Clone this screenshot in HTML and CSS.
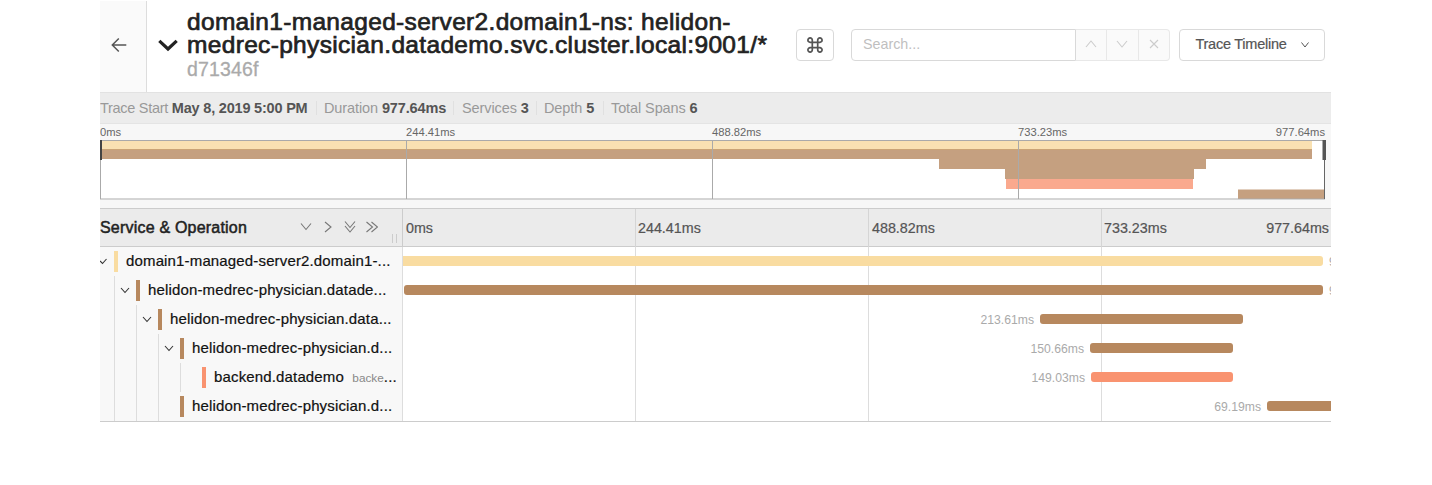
FILE: index.html
```html
<!DOCTYPE html>
<html lang="en">
<head>
<meta charset="utf-8">
<title>Trace Timeline</title>
<link rel="stylesheet" href="styles.css">
</head>
<body>
<main class="trace">
  <header class="top">
    <a class="back"><svg width="16" height="16" viewBox="0 0 16 16"><path d="M15.3 8H1.5M7.8 1.5L1.3 8l6.5 6.5" fill="none" stroke="#555" stroke-width="1.5"/></svg></a>
    <svg class="toggle" width="20" height="13" viewBox="0 0 20 13"><path d="M1.3 1.8L10 10l8.700-8.200" fill="none" stroke="#222" stroke-width="3.200"/></svg>
    <h1 class="title"><span class="t1">domain1-managed-server2.domain1-ns: helidon-</span><span class="t2">medrec-physician.datademo.svc.cluster.local:9001/*</span><small>d71346f</small></h1>
    <button class="btn cmd"><svg width="16" height="16" viewBox="0 0 16 16"><path d="M5.300 5.300H10.700V10.700H5.300ZM5.300 5.300H3.200A2.200 2.200 0 1 1 5.300 3.200ZM10.700 5.300V3.200A2.200 2.200 0 1 1 12.800 5.300ZM10.700 10.700H12.800A2.200 2.200 0 1 1 10.700 12.800ZM5.300 10.700V12.800A2.200 2.200 0 1 1 3.200 10.700Z" fill="none" stroke="#555" stroke-width="1.700"/></svg></button>
    <div class="search">
      <div class="input">Search...</div>
      <span class="nav"><svg width="12" height="8" viewBox="0 0 12 8"><path d="M1 7l5-6 5 6"/></svg></span>
      <span class="nav"><svg width="12" height="8" viewBox="0 0 12 8"><path d="M1 1l5 6 5-6"/></svg></span>
      <span class="nav"><svg width="10" height="10" viewBox="0 0 10 10"><path d="M1 1l8 8M9 1L1 9"/></svg></span>
    </div>
    <button class="btn view"><span>Trace Timeline</span><svg width="8" height="6" viewBox="0 0 8 6"><path d="M.5.5L4 5 7.500.5" fill="none" stroke="#555"/></svg></button>
  </header>

  <section class="stats">
    <span class="s1">Trace Start <b>May 8, 2019 5:00 PM</b></span>
    <span class="s2">Duration <b>977.64ms</b></span>
    <span class="s3">Services <b>3</b></span>
    <span class="s4">Depth <b>5</b></span>
    <span class="s5">Total Spans <b>6</b></span>
  </section>

  <section class="overview">
    <div class="mini-ticks"><span>0ms</span><span>244.41ms</span><span>488.82ms</span><span class="pair"><em>733.23ms</em><em>977.64ms</em></span></div>
    <svg class="minimap" width="1227" height="60" viewBox="0 0 1227 60">
      <rect width="1225" height="60" fill="#fff"/>
      <rect x="1" y="1" width="1211" height="8" fill="#f9e1b2"/>
      <path d="M1 9H1212V19H1106V29H1094V39H905V29H839V19H1ZM1138 49.500H1225V59H1138Z" fill="#c5a080"/>
      <path d="M1 9.500H1212" stroke="#caa476"/>
      <rect x="906" y="39" width="187" height="10" fill="#faa98e"/>
      <path d="M306.500 1V59M612.500 1V59M918.500 1V59" stroke="#aaa"/>
      <path d="M0 .5H1225M.5 0V59M0 59H1225" fill="none" stroke="#aaa"/>
      <path d="M1224.500 0V59" stroke="#666"/>
      <path d="M1 0V20" stroke="#444" stroke-width="2"/>
      <rect x="1222.500" width="3.500" height="20" fill="#555"/>
    </svg>
  </section>

  <section class="timeline">
    <div class="head">
      <div class="name-head">
        <h2>Service &amp; Operation</h2>
        <div class="tools">
          <svg width="12" height="12" viewBox="0 0 12 12"><path d="M1 2.500l5 6 5-6"/></svg>
          <svg width="12" height="12" viewBox="0 0 12 12"><path d="M3 1l6 5-6 5"/></svg>
          <svg width="12" height="12" viewBox="0 0 12 12"><path d="M1 .5l5 6 5-6M1 5l5 6 5-6"/></svg>
          <svg width="12" height="12" viewBox="0 0 12 12"><path d="M.5 1l6 5-6 5M5.500 1l6 5-6 5"/></svg>
        </div>
        <i class="grip"></i>
      </div>
      <div class="ticks"><span>0ms</span><span>244.41ms</span><span>488.82ms</span><span class="pair"><em>733.23ms</em><em>977.64ms</em></span></div>
    </div>
    <div class="rows">
      <div class="names">
        <div class="row"><svg class="caret first" viewBox="0 0 10 7"><path d="M2 3l2.500 2.500L8.500 1"/></svg><i class="tag yellow"></i><span class="n0">domain1-managed-server2.domain1-...</span></div>
        <div class="row"><i class="guide"></i><svg class="caret" viewBox="0 0 10 7"><path d="M1 1l4 4.500L9 1"/></svg><i class="tag"></i><span>helidon-medrec-physician.datade...</span></div>
        <div class="row"><i class="guide"></i><i class="guide"></i><svg class="caret" viewBox="0 0 10 7"><path d="M1 1l4 4.500L9 1"/></svg><i class="tag"></i><span>helidon-medrec-physician.data...</span></div>
        <div class="row"><i class="guide"></i><i class="guide"></i><i class="guide"></i><svg class="caret" viewBox="0 0 10 7"><path d="M1 1l4 4.500L9 1"/></svg><i class="tag"></i><span>helidon-medrec-physician.d...</span></div>
        <div class="row"><i class="guide"></i><i class="guide"></i><i class="guide"></i><i class="guide"></i><b class="gap"></b><i class="tag coral"></i><span>backend.datademo <small>backe</small>...</span></div>
        <div class="row"><i class="guide"></i><i class="guide"></i><i class="guide"></i><b class="gap"></b><i class="tag"></i><span>helidon-medrec-physician.d...</span></div>
      </div>
      <div class="bars">
        <div class="span"><i class="bar yellow square" style="width:920px"></i><span class="after">977.64ms</span></div>
        <div class="span"><span class="dur" style="width:1px"></span><i class="bar" style="width:919px"></i><span class="after">977.53ms</span></div>
        <div class="span"><span class="dur" style="width:637px">213.61ms</span><i class="bar" style="width:203px"></i></div>
        <div class="span"><span class="dur" style="width:687px">150.66ms</span><i class="bar" style="width:143px"></i></div>
        <div class="span"><span class="dur" style="width:688px">149.03ms</span><i class="bar coral" style="width:142px"></i></div>
        <div class="span"><span class="dur" style="width:864px">69.19ms</span><i class="bar" style="width:70px"></i></div>
      </div>
    </div>
  </section>
</main>
</body>
</html>
```
FILE: styles.css
```css
* { box-sizing: border-box; }
body { margin: 0; background: #fff; font-family: "Liberation Sans", Arial, sans-serif; color: #555; }
.trace { width: 1231px; margin-left: 100px; overflow: hidden; white-space: nowrap; }
h1, h2 { margin: 0; font-weight: 400; }
i, em { font-style: normal; }

.top { display: flex; align-items: center; height: 92px; padding-top: 1px; padding-right: 6px; }
.back { display: flex; align-items: center; justify-content: center; width: 47px; height: 91px; padding-right: 9px; background: #fafafa; border-right: 1px solid #ddd; }
.back svg { margin-top: -4px; }
.toggle { margin: -2px 9px 0 11px; }
.title { display: flex; flex-direction: column; width: 609px; height: 71px; margin-top: -2px; color: #222; font-size: 24.500px; line-height: 23px; -webkit-text-stroke: .7px #222; }
.t1 { letter-spacing: .32px; }
.t2 { letter-spacing: .33px; }
.title small { font-size: 19.500px; line-height: 26px; letter-spacing: .15px; color: #aaa; -webkit-text-stroke: .3px #aaa; }
.btn { display: flex; align-items: center; justify-content: center; height: 32px; margin: -4px 0 0; padding: 0; background: #fff; border: 1px solid #d9d9d9; border-radius: 4px; font: 14.500px "Liberation Sans", Arial, sans-serif; color: #555; }
.cmd { width: 38px; }
.search { display: flex; width: 319px; height: 32px; margin: -4px 9px 0 17px; }
.input { width: 225px; border: 1px solid #d9d9d9; border-radius: 4px 0 0 4px; padding-left: 11px; font-size: 14.300px; line-height: 29px; color: #bfbfbf; }
.nav { display: flex; flex: 1; align-items: center; justify-content: center; background: #fafafa; border: 1px solid #e8e8e8; border-left: 0; }
.nav:last-child { border-radius: 0 4px 4px 0; }
.nav svg { margin-top: -2px; fill: none; stroke: #ccc; stroke-width: 1.100; }
.view { width: 146px; gap: 14px; letter-spacing: -.25px; -webkit-text-stroke: .2px #555; }
.view span { margin-top: -1px; }

.stats { display: flex; height: 32px; padding-bottom: 1px; align-items: center; background: #ececec; border-top: 1px solid #e2e2e2; border-bottom: 1px solid #e4e4e4; font-size: 14.500px; letter-spacing: -.1px; color: #999; }
.stats span { border-right: 1px solid #e0e0e0; line-height: 14px; }
.stats b { color: #555; letter-spacing: -.15px; }
.stats .s1 { width: 217px; letter-spacing: -.28px; }
.s1 b { letter-spacing: -.2px; }
.s2 { width: 137px; padding-left: 7px; }
.s3 { width: 83px; padding-left: 8px; }
.s4 { width: 67px; padding-left: 7px; }
.stats .s5 { padding-left: 7px; border: 0; }

.overview { height: 84px; background: #f7f7f7; }
.mini-ticks { display: grid; grid-template-columns: 306px 306px 306px 307px; height: 16px; line-height: 16px; font-size: 11.200px; color: #666; }
.mini-ticks .pair { display: flex; justify-content: space-between; }
.minimap { display: block; }

.head { display: flex; height: 39px; background: #ebebeb; border-top: 1px solid #ccc; border-bottom: 1px solid #ccc; }
.name-head { position: relative; display: flex; align-items: center; width: 303px; border-right: 1px solid #ccc; }
h2 { width: 200px; font-size: 16px; letter-spacing: .2px; color: #222; -webkit-text-stroke: .5px #222; }
.tools { display: flex; gap: 10px; margin-top: -2px; }
.tools svg { fill: none; stroke: #777; stroke-width: 1.100; }
.grip { position: absolute; right: 5px; bottom: 3px; width: 5px; height: 9px; border: solid #ccc; border-width: 0 1px; }
.ticks { display: grid; grid-template-columns: 233px 233px 233px 229px; line-height: 38px; font-size: 14.300px; -webkit-text-stroke: .2px #555; }
.ticks span { padding-left: 3px; border-right: 1px solid #d5d5d5; }
.ticks span:nth-child(2) { padding-left: 2px; }
.ticks .pair { display: flex; justify-content: space-between; padding: 0 2px 0 2px; border: 0; }

.rows { display: flex; height: 175px; border-bottom: 1px solid #ccc; }
.names { width: 303px; background: #f8f8f8; border-right: 1px solid #ddd; }
.row { display: flex; align-items: center; height: 29px; font-size: 15px; letter-spacing: .15px; color: #111; }
.row span { padding-left: 8px; padding-bottom: 2px; -webkit-text-stroke: .2px #111; }
.row small { margin-left: 4px; font-size: 11.800px; letter-spacing: 0; color: #888; -webkit-text-stroke: 0; }
.guide { width: 22px; height: 29px; padding-right: 7px; }
.guide::after { content: ""; display: block; width: 1px; height: 29px; margin-left: 14px; background: #ddd; }
.caret { width: 10px; height: 7px; margin: -1px 6px 0 -2px; fill: none; stroke: #333; stroke-width: 1.100; }
.gap { width: 14px; }
.tag { width: 4px; height: 21px; background: #b7885e; }
.yellow { background: #f9dca1; }
.coral { background: #f99370; }
.bars { flex: none; width: 928px; overflow: hidden; background: linear-gradient(#ddd, #ddd) 232px 0 / 1px 100% no-repeat, linear-gradient(#ddd, #ddd) 465px 0 / 1px 100% no-repeat, linear-gradient(#ddd, #ddd) 698px 0 / 1px 100% no-repeat; }
.span { display: flex; align-items: center; height: 29px; padding-bottom: 1px; font-size: 12.200px; color: #aaa; }
.bar { flex: none; height: 10px; background: #b7885e; border-radius: 3px; }
.bar.yellow { background: #f9dca1; }
.bar.coral { background: #f99370; }
.bar.square { border-radius: 0 3px 3px 0; }
.dur { flex: none; padding-right: 6px; text-align: right; padding-top: 2px; }
.dur:empty { padding: 0; }
.after { padding: 2px 0 0 6px; }
```
